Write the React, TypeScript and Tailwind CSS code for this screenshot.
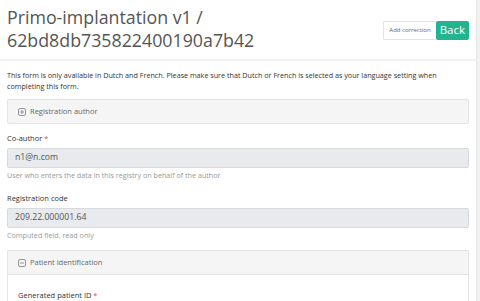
const font = { fontFamily: '"Open Sans", "Noto Sans", sans-serif' };

function BoxIcon({ open }: { open: boolean }) {
  return (
    <svg width="8" height="8" viewBox="0 0 8 8" className="shrink-0">
      <rect x="0.5" y="0.5" width="7" height="7" rx="1.5" fill="none" stroke="#8a8a8a" strokeWidth="0.9" />
      <line x1="2" y1="4" x2="6" y2="4" stroke="#8a8a8a" strokeWidth="0.9" />
      {!open && <line x1="4" y1="2" x2="4" y2="6" stroke="#8a8a8a" strokeWidth="0.9" />}
    </svg>
  );
}

function Field({ label, required, value, help, className }: { label: string; required?: boolean; value: string; help: string; className?: string }) {
  return (
    <div className={className}>
      <div className="text-[7.5px] leading-[11px] font-medium text-[#333]">
        {label}
        {required && <span className="text-[#e74c3c]"> *</span>}
      </div>
      <div className="mt-[4.5px] h-[20px] flex items-center px-[7px] bg-[#e8eaed] border border-[#d6d9dd] rounded-[2px] text-[8.7px] text-[#555]">
        {value}
      </div>
      <div className="mt-[1.5px] text-[7.2px] leading-[11px] text-[#999]">{help}</div>
    </div>
  );
}

export default function App() {
  return (
    <div className="w-[480px] h-[301px] overflow-hidden bg-white flex" style={font}>
      <div className="flex-1 min-w-0 flex flex-col">
        <div className="h-[1px] bg-[#9fd9c8]" />
        <div className="px-[7px] flex items-center justify-between border-b-2 border-[#f0f0f0] pt-[6px] pb-[7px]">
          <h1 className="text-[17.8px] leading-[23px] text-[#555] font-normal">
            Primo-implantation v1 /<br />62bd8db735822400190a7b42
          </h1>
          <div className="flex mt-[2px]">
            <button className="h-[19px] px-[5px] border border-[#e3e3e3] border-r-0 rounded-l-[2px] bg-white text-[6px] text-[#666]">
              Add correction
            </button>
            <button className="h-[19px] px-[4px] bg-[#22b38f] rounded-[2px] text-[11.5px] text-white">Back</button>
          </div>
        </div>
        <div className="px-[7px]">
          <p className="mt-[8.5px] text-[7.2px] leading-[11px] text-[#333]">
            This form is only available in Dutch and French. Please make sure that Dutch or French is selected as your language setting when completing this form.
          </p>
          <div className="mt-[7.5px] h-[25px] flex items-center gap-[4px] pl-[10px] bg-[#f5f5f5] border border-[#e3e3e3] rounded-[2px] text-[7.5px] text-[#666]">
            <BoxIcon open={false} />
            Registration author
          </div>
          <Field className="mt-[8.5px]" label="Co-author" required value="n1@n.com" help="User who enters the data in this registry on behalf of the author" />
          <Field className="mt-[12px]" label="Registration code" value="209.22.000001.64" help="Computed field, read only" />
          <div className="mt-[9.5px] border border-[#e3e3e3] rounded-t-[2px] border-b-0">
            <div className="h-[24px] flex items-center gap-[4px] pl-[10px] bg-[#f5f5f5] border-b border-[#e3e3e3] text-[7.5px] text-[#666]">
              <BoxIcon open={true} />
              Patient identification
            </div>
            <div className="px-[10px] pt-[15px] pb-[10px]">
              <div className="text-[7.5px] leading-[11px] font-medium text-[#333]">
                Generated patient ID<span className="text-[#e74c3c]"> *</span>
              </div>
            </div>
          </div>
        </div>
      </div>
      <div className="w-[4px] bg-[#f1f1f1] border-l border-[#e6e6e6]" />
    </div>
  );
}
